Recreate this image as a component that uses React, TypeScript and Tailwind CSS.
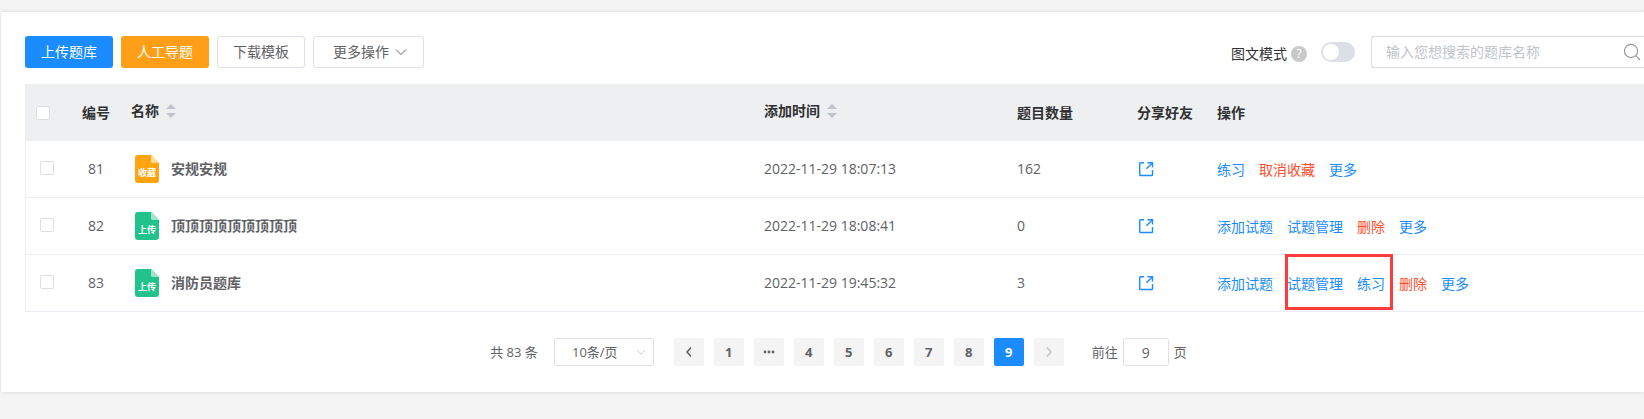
import React from 'react';

type Action = { text: string; danger?: boolean };

type Row = {
  id: number;
  tag: string;
  name: string;
  time: string;
  count: number;
  before: Action[];
  marked?: Action[];
  after?: Action[];
};

const rows: Row[] = [
  {
    id: 81,
    tag: '收藏',
    name: '安规安规',
    time: '2022-11-29 18:07:13',
    count: 162,
    before: [{ text: '练习' }, { text: '取消收藏', danger: true }, { text: '更多' }],
  },
  {
    id: 82,
    tag: '上传',
    name: '顶顶顶顶顶顶顶顶顶',
    time: '2022-11-29 18:08:41',
    count: 0,
    before: [{ text: '添加试题' }, { text: '试题管理' }, { text: '删除', danger: true }, { text: '更多' }],
  },
  {
    id: 83,
    tag: '上传',
    name: '消防员题库',
    time: '2022-11-29 19:45:32',
    count: 3,
    before: [{ text: '添加试题' }],
    marked: [{ text: '试题管理' }, { text: '练习' }],
    after: [{ text: '删除', danger: true }, { text: '更多' }],
  },
];

const checkboxClass =
  'block size-3.5 appearance-none rounded-xs border border-[#dcdfe6] bg-white checked:bg-[#1a8cff]';

const SortCaret = () => (
  <svg width="10" height="14" viewBox="0 0 10 14" fill="#c0c4cc">
    <path d="M5 0 L10 5 H0 Z" />
    <path d="M0 9 H10 L5 14 Z" />
  </svg>
);

const Chevron = ({ className }: { className?: string }) => (
  <svg className={className} width="12" height="8" viewBox="0 0 12 8" fill="none" stroke="currentColor">
    <path d="M1 1.5 L6 6.5 L11 1.5" />
  </svg>
);

const ShareIcon = () => (
  <svg width="16" height="16" viewBox="0 0 16 16" fill="none" stroke="#1a8cff" strokeWidth="1.4">
    <path d="M6 1.7 H2.5 Q1.7 1.7 1.7 2.5 V13.7 Q1.7 14.5 2.5 14.5 H13.7 Q14.5 14.5 14.5 13.7 V9" />
    <path d="M9.5 1.7 H14.5 V6.5" />
    <path d="M14.3 1.9 L8.4 7.8" />
  </svg>
);

const FileIcon = ({ tag }: { tag: string }) => (
  <span className="relative block h-7 w-6 shrink-0">
    <svg width="24" height="28" viewBox="0 0 24 28">
      <path
        d="M3 0 H16 L24 8 V25 Q24 28 21 28 H3 Q0 28 0 25 V3 Q0 0 3 0 Z"
        fill={tag === '收藏' ? '#ffa30f' : '#22c38a'}
      />
      <path d="M16 0 L24 8 H17.5 Q16 8 16 6.5 Z" fill={tag === '收藏' ? '#ffdb9f' : '#a0e4cb'} />
    </svg>
    <span className="absolute inset-x-0 bottom-1 text-center text-[9px] leading-3 font-bold whitespace-nowrap text-white">
      {tag}
    </span>
  </span>
);

const ActionLinks = ({ items }: { items: Action[] }) => (
  <>
    {items.map((a) => (
      <a key={a.text} href="#" className={a.danger ? 'text-[#ff4d2e]' : 'text-[#1a8cff]'}>
        {a.text}
      </a>
    ))}
  </>
);

const pagerClass = 'flex h-7 w-[30px] items-center justify-center rounded-xs bg-[#f4f4f5] font-bold';

const App: React.FC = () => {
  return (
    <div className="min-h-screen bg-[#f4f4f4] pt-3 pl-px font-['Open_Sans','Noto_Sans_CJK_SC',sans-serif] text-sm text-[#606266]">
      <div className="bg-white pt-6 pb-[26px] pl-6 shadow-[0_0_4px_rgba(0,0,0,0.12)]">
        {/* toolbar */}
        <div className="flex items-center justify-between">
          <div className="flex gap-2">
            <button className="h-8 rounded-[3px] bg-[#1a8cff] px-4 text-white">上传题库</button>
            <button className="h-8 rounded-[3px] bg-[#ff9f18] px-4 text-white">人工导题</button>
            <button className="h-8 rounded-[3px] border border-[#dcdfe6] px-[15px]">下载模板</button>
            <button className="flex h-8 items-center gap-1.5 rounded-[3px] border border-[#dcdfe6] pr-4 pl-[19px]">
              更多操作
              <Chevron />
            </button>
          </div>
          <div className="flex items-center">
            <label htmlFor="mode" className="pt-1 text-[#303133]">
              图文模式
            </label>
            <span className="mt-1 ml-1 flex size-4 items-center justify-center rounded-full bg-[#c8c8c8] text-xs text-white">
              ?
            </span>
            <input
              id="mode"
              type="checkbox"
              role="switch"
              className="ml-3.5 h-5 w-[34px] appearance-none rounded-full bg-[#dcdfe6] before:m-0.5 before:block before:size-4 before:rounded-full before:bg-white"
            />
            <div className="ml-4 flex h-8 w-[273px] items-center rounded-l-[3px] border border-r-0 border-[#dcdcdc] pr-[3px] pl-3.5">
              <input
                type="text"
                aria-label="搜索题库"
                placeholder="输入您想搜索的题库名称"
                className="min-w-0 flex-1 outline-none placeholder:text-[#c0c4cc]"
              />
              <svg width="18" height="18" viewBox="0 0 18 18" fill="none" stroke="#909399" strokeWidth="1.1">
                <circle cx="8" cy="8" r="6.6" />
                <path d="M12.7 12.7 L17 17" />
              </svg>
            </div>
          </div>
        </div>

        {/* question banks */}
        <table className="mt-4 w-full table-fixed border-separate border-spacing-0 border-l border-[#ebeef5] text-left">
          <colgroup>
            <col className="w-[45px]" />
            <col className="w-[50px]" />
            <col />
            <col className="w-[253px]" />
            <col className="w-[120px]" />
            <col className="w-20" />
            <col className="w-[437px]" />
          </colgroup>
          <thead className="bg-[#eeeff1] text-[#303133]">
            <tr className="h-[57px]">
              <th className="px-2.5">
                <input type="checkbox" aria-label="全选" className={checkboxClass} />
              </th>
              <th className="text-center">编号</th>
              <th className="px-2.5">
                <span className="flex items-center gap-[7px] pb-1">
                  名称 <SortCaret />
                </span>
              </th>
              <th className="px-2.5">
                <span className="flex items-center gap-[7px] pb-1">
                  添加时间 <SortCaret />
                </span>
              </th>
              <th className="px-2.5">题目数量</th>
              <th className="px-2.5 whitespace-nowrap">分享好友</th>
              <th className="px-2.5">操作</th>
            </tr>
          </thead>
          <tbody className="[&_td]:border-b [&_td]:border-[#ebeef5]">
            {rows.map((row) => (
              <tr key={row.id} className="h-[57px]">
                <td className="pb-0.5 pl-3.5">
                  <input type="checkbox" aria-label={row.name} className={checkboxClass} />
                </td>
                <td className="text-center">{row.id}</td>
                <td className="px-3.5">
                  <span className="flex items-center gap-3 font-bold">
                    <FileIcon tag={row.tag} />
                    {row.name}
                  </span>
                </td>
                <td className="px-2.5">{row.time}</td>
                <td className="px-2.5">{row.count}</td>
                <td className="px-[11px]">
                  <button aria-label="分享" className="block">
                    <ShareIcon />
                  </button>
                </td>
                <td className="px-2.5 pt-0.5">
                  <div className="flex gap-3.5">
                    <ActionLinks items={row.before} />
                    {row.marked && (
                      <span className="relative flex gap-3.5">
                        <ActionLinks items={row.marked} />
                        <span className="pointer-events-none absolute -top-5 -right-2 -bottom-4 -left-0.5 border-3 border-[#ff3b3b]" />
                      </span>
                    )}
                    {row.after && <ActionLinks items={row.after} />}
                  </div>
                </td>
              </tr>
            ))}
          </tbody>
        </table>

        {/* pagination */}
        <div className="mt-[26px] flex items-center justify-center pl-2 text-[13px]">
          <span>共 83 条</span>
          <div className="relative ml-4">
            <select
              aria-label="每页条数"
              className="h-7 w-[100px] appearance-none rounded-[3px] border border-[#dcdfe6] pr-6 pl-1.5 text-center"
            >
              <option>10条/页</option>
            </select>
            <Chevron className="pointer-events-none absolute top-2.5 right-2 h-2 w-2.5 text-[#c0c4cc]" />
          </div>
          <nav className="ml-5 flex gap-2.5">
            <button aria-label="上一页" className={pagerClass}>
              <svg width="8" height="12" viewBox="0 0 8 12" fill="none" stroke="currentColor" strokeWidth="1.5">
                <path d="M6 1.5 L2 6 L6 10.5" />
              </svg>
            </button>
            <button className={pagerClass}>1</button>
            <button aria-label="更多页" className={pagerClass}>
              <svg width="12" height="4" viewBox="0 0 12 4" fill="currentColor">
                <circle cx="2" cy="2" r="1.4" />
                <circle cx="6" cy="2" r="1.4" />
                <circle cx="10" cy="2" r="1.4" />
              </svg>
            </button>
            {[4, 5, 6, 7, 8].map((n) => (
              <button key={n} className={pagerClass}>
                {n}
              </button>
            ))}
            <button className="flex h-7 w-[30px] items-center justify-center rounded-xs bg-[#1a8cff] font-bold text-white">
              9
            </button>
            <button aria-label="下一页" className={pagerClass}>
              <svg width="8" height="12" viewBox="0 0 8 12" fill="none" stroke="#c0c4cc" strokeWidth="1.5">
                <path d="M2 1.5 L6 6 L2 10.5" />
              </svg>
            </button>
          </nav>
          <label htmlFor="jump" className="ml-7">
            前往
          </label>
          <input
            id="jump"
            type="text"
            defaultValue="9"
            className="mx-[5px] h-7 w-[46px] rounded-[3px] border border-[#dcdfe6] text-center text-sm"
          />
          <span>页</span>
        </div>
      </div>
    </div>
  );
};

export default App;
